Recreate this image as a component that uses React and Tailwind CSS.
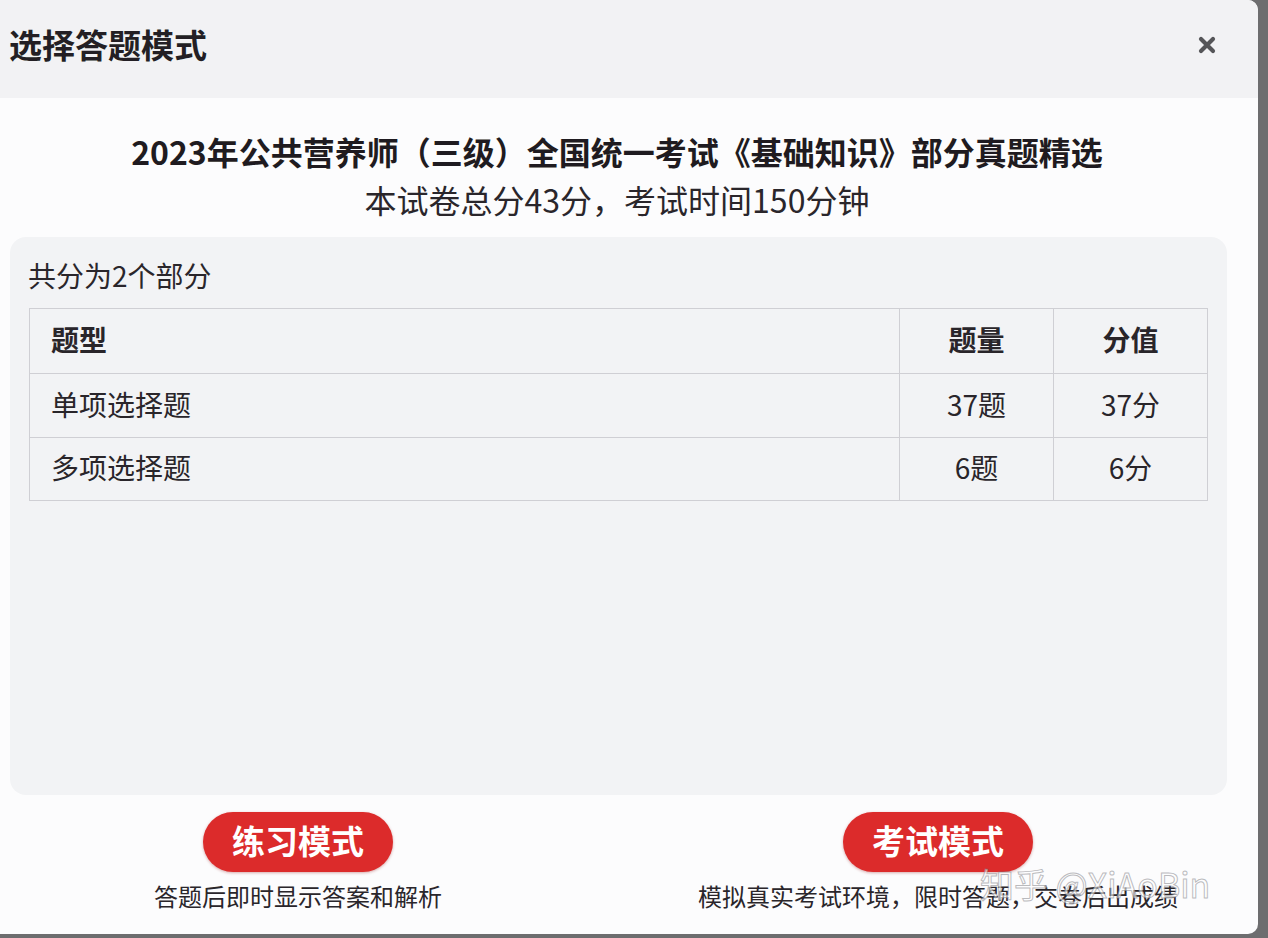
import React from "react";

const font = { fontFamily: '"Noto Sans CJK SC", "Noto Sans", sans-serif' };

export default function App() {
  return (
    <div className="w-[1268px] h-[938px] bg-[#6d6d6f] flex items-start overflow-hidden" style={font}>
      <div className="relative w-[1258px] h-[934px] bg-[#fcfcfd] rounded-r-[10px] flex flex-col overflow-hidden">
        {/* header */}
        <div className="h-[98px] bg-[#f2f2f4] flex items-center justify-between pl-[9px] pr-[42px] shrink-0">
          <div className="text-[33px] font-bold text-[#231f24] leading-none pb-[10px]">选择答题模式</div>
          <svg width="18" height="18" viewBox="0 0 18 18" className="mb-[8px]">
            <path d="M3 3 L15 15 M15 3 L3 15" stroke="#555558" strokeWidth="4.2" strokeLinecap="round" />
          </svg>
        </div>

        {/* title */}
        <div className="pt-[29px] pr-[24px] flex flex-col items-center text-[#1f1b20]">
          <div className="text-[32px] font-bold leading-[48px]">2023年公共营养师（三级）全国统一考试《基础知识》部分真题精选</div>
          <div className="text-[32px] leading-[48px] text-[#2a262b]">本试卷总分43分，考试时间150分钟</div>
        </div>

        {/* panel */}
        <div className="mt-[14px] ml-[10px] w-[1217px] h-[558px] bg-[#f2f3f5] rounded-[16px] pt-[20px] pl-[19px]">
          <div className="text-[28px] leading-[36px] text-[#2a262b] -ml-[1px]">共分为2个部分</div>
          <table className="mt-[15px] border-collapse text-[#29252a] text-[28px]">
            <colgroup>
              <col className="w-[870px]" />
              <col className="w-[154px]" />
              <col className="w-[154px]" />
            </colgroup>
            <tbody>
              <tr className="h-[65px]">
                <td className="border border-[#cfcfd4] pl-[21px] font-bold pb-[4px]">题型</td>
                <td className="border border-[#cfcfd4] text-center font-bold pb-[4px]">题量</td>
                <td className="border border-[#cfcfd4] text-center font-bold pb-[4px]">分值</td>
              </tr>
              <tr className="h-[64px]">
                <td className="border border-[#cfcfd4] pl-[21px] pb-[4px]">单项选择题</td>
                <td className="border border-[#cfcfd4] text-center pb-[4px]">37题</td>
                <td className="border border-[#cfcfd4] text-center pb-[4px]">37分</td>
              </tr>
              <tr className="h-[63px]">
                <td className="border border-[#cfcfd4] pl-[21px] pb-[4px]">多项选择题</td>
                <td className="border border-[#cfcfd4] text-center pb-[4px]">6题</td>
                <td className="border border-[#cfcfd4] text-center pb-[4px]">6分</td>
              </tr>
            </tbody>
          </table>
        </div>

        {/* buttons */}
        <div className="mt-[17px] flex pl-[48px] gap-[140px]">
          <div className="w-[500px] flex flex-col items-center">
            <button className="w-[190px] h-[60px] rounded-full bg-[#dc2b2b] text-white text-[33px] font-bold leading-none pb-[4px] shadow-[0_1px_3px_rgba(150,20,20,0.35)]">练习模式</button>
            <div className="mt-[9px] text-[24px] leading-[30px] text-[#2a262b]">答题后即时显示答案和解析</div>
          </div>
          <div className="w-[500px] flex flex-col items-center">
            <button className="w-[190px] h-[60px] rounded-full bg-[#dc2b2b] text-white text-[33px] font-bold leading-none pb-[4px] shadow-[0_1px_3px_rgba(150,20,20,0.35)]">考试模式</button>
            <div className="mt-[9px] text-[24px] leading-[30px] text-[#2a262b]">模拟真实考试环境，限时答题，交卷后出成绩</div>
          </div>
        </div>

        {/* watermark */}
        <div className="absolute left-[980px] top-[862px] text-[34px] leading-[44px] text-white/60 whitespace-nowrap" style={{ WebkitTextStroke: "1px rgba(120,120,125,0.5)" }}>
          知乎 @XiAoBin
        </div>
      </div>
    </div>
  );
}
